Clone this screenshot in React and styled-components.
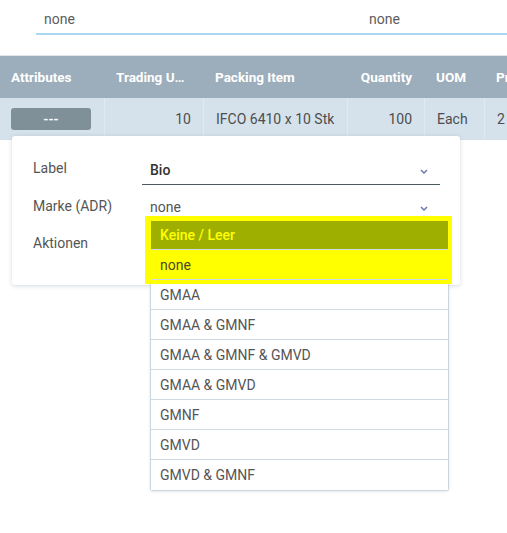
import React from "react";
import styled, { createGlobalStyle } from "styled-components";

const GlobalStyle = createGlobalStyle`
  html, body {
    margin: 0;
    padding: 0;
    background: #ffffff;
    font-family: Roboto, "Liberation Sans", Arial, sans-serif;
    font-size: 14px;
    color: #555;
    overflow: hidden;
  }
  * { box-sizing: border-box; }
`;

const Page = styled.div`
  position: relative;
  width: 507px;
  height: 533px;
  overflow: hidden;
`;

/* ---------- filter bar ---------- */
const FilterBar = styled.div`
  display: flex;
  height: 55px;
  padding-left: 36px;
`;

const FilterFields = styled.div`
  display: flex;
  flex: 1;
  height: 35px;
  border-bottom: 2px solid #a9d7f3;
`;

const FilterField = styled.div`
  width: ${(p) => p.$width}px;
  padding: 11px 8px 0;
  line-height: 17px;
  color: #5c5c5c;
`;

/* ---------- table ---------- */
const Table = styled.div`
  display: grid;
  grid-template-columns: 104px 99px 144px 77px 60px 90px;
  width: 574px;
`;

const HeadCell = styled.div`
  height: 43px;
  border-top: 1px solid #dfe5e9;
  background: #9caebb;
  color: #ffffff;
  font-size: 13.5px;
  font-weight: 700;
  display: flex;
  align-items: center;
  justify-content: ${(p) => (p.$right ? "flex-end" : "flex-start")};
  padding: 0 ${(p) => (p.$first ? 11 : 12)}px;
  white-space: nowrap;
`;

const HeadText = styled.span`
  display: block;
  max-width: ${(p) => (p.$clip ? "70px" : "none")};
  overflow: ${(p) => (p.$clip ? "hidden" : "visible")};
  text-overflow: ellipsis;
`;

const BodyCell = styled.div`
  height: 42px;
  background: #d5e2ec;
  border-left: ${(p) => (p.$first ? "none" : "1px solid #e0e9f0")};
  color: #4d4d4d;
  display: flex;
  align-items: center;
  justify-content: ${(p) => (p.$right ? "flex-end" : "flex-start")};
  padding: 0 ${(p) => (p.$first ? 11 : 12)}px;
  white-space: nowrap;
`;

const AttrButton = styled.div`
  width: 80px;
  height: 22px;
  border-radius: 3px;
  background: #7f9099;
  color: #ffffff;
  font-size: 13px;
  font-weight: 700;
  display: flex;
  align-items: center;
  justify-content: center;
`;

/* ---------- attribute popup ---------- */
const Popup = styled.div`
  position: absolute;
  top: 136px;
  left: 12px;
  width: 448px;
  height: 149px;
  background: #ffffff;
  border-radius: 3px;
  box-shadow: 0 1px 4px rgba(60, 80, 100, 0.22);
  padding: 13px 20px 0 21px;
  display: grid;
  grid-template-columns: 109px 1fr;
  grid-template-rows: 37px 37px 37px;
`;

const FieldLabel = styled.div`
  display: flex;
  align-items: center;
  color: #555;
  padding-top: ${(p) => p.$shift || 0}px;
`;

const Select = styled.div`
  position: relative;
  height: 36px;
  display: flex;
  align-items: flex-end;
  justify-content: space-between;
  padding: 0 12px 5px 8px;
  border-bottom: 1px solid ${(p) => (p.$underline ? "#4c5a61" : "transparent")};
  color: ${(p) => (p.$strong ? "#333" : "#555")};
  font-weight: ${(p) => (p.$strong ? 500 : 400)};
  line-height: 17px;
`;

const Chevron = styled.svg`
  width: 8px;
  height: 5px;
  margin-bottom: 5px;
`;

const ChevronIcon = () => (
  <Chevron viewBox="0 0 8 5">
    <path d="M1 1 L4 4 L7 1" fill="none" stroke="#6e79b0" strokeWidth="1.5" />
  </Chevron>
);

/* ---------- option list ---------- */
const OptionList = styled.div`
  position: absolute;
  top: 84px;
  left: 138px;
  width: 299px;
  background: #ffffff;
  border: 1px solid #c9d6de;
  border-top: none;
  border-radius: 0 0 3px 3px;
  box-shadow: 0 1px 3px rgba(60, 80, 100, 0.12);
  z-index: 2;
`;

const Option = styled.div`
  height: 30px;
  display: flex;
  align-items: center;
  padding: 0 9px;
  border-bottom: ${(p) => (p.$last ? "none" : "1px solid #cfdae2")};
  background: ${(p) => (p.$active ? "#9eaf00" : p.$marked ? "#ffff00" : "#ffffff")};
  color: ${(p) => (p.$active ? "#ffff00" : p.$marked ? "#4a4a2a" : "#555")};
  font-weight: ${(p) => (p.$active ? 500 : 400)};
  white-space: nowrap;
`;

const FocusRing = styled.div`
  position: absolute;
  top: -4px;
  left: -6px;
  right: -4px;
  height: 68px;
  border-style: solid;
  border-color: #ffff00;
  border-width: 5px 4px 4px 6px;
  pointer-events: none;
`;

const columns = [
  { key: "attr", title: "Attributes" },
  { key: "tu", title: "Trading Unit", right: true, clip: true },
  { key: "pack", title: "Packing Item" },
  { key: "qty", title: "Quantity", right: true },
  { key: "uom", title: "UOM" },
  { key: "price", title: "Price" },
];

const row = {
  tu: "10",
  pack: "IFCO 6410 x 10 Stk",
  qty: "100",
  uom: "Each",
  price: "2",
};

const options = [
  "Keine / Leer",
  "none",
  "GMAA",
  "GMAA & GMNF",
  "GMAA & GMNF & GMVD",
  "GMAA & GMVD",
  "GMNF",
  "GMVD",
  "GMVD & GMNF",
];

export default function App() {
  return (
    <>
      <GlobalStyle />
      <Page>
        <FilterBar>
          <FilterFields>
            <FilterField $width={325}>none</FilterField>
            <FilterField $width={146}>none</FilterField>
          </FilterFields>
        </FilterBar>

        <Table>
          {columns.map((c, i) => (
            <HeadCell key={c.key} $right={c.right && !c.clip} $first={i === 0}>
              <HeadText $clip={c.clip}>{c.title}</HeadText>
            </HeadCell>
          ))}
          {columns.map((c, i) => (
            <BodyCell key={c.key} $right={c.right} $first={i === 0}>
              {i === 0 ? <AttrButton>---</AttrButton> : row[c.key]}
            </BodyCell>
          ))}
        </Table>

        <Popup>
          <FieldLabel>Label</FieldLabel>
          <Select $underline $strong>
            <span>Bio</span>
            <ChevronIcon />
          </Select>
          <FieldLabel $shift={2}>Marke (ADR)</FieldLabel>
          <Select>
            <span>none</span>
            <ChevronIcon />
          </Select>
          <FieldLabel $shift={2}>Aktionen</FieldLabel>
          <div />

          <OptionList>
            {options.map((o, i) => (
              <Option
                key={o}
                $active={i === 0}
                $marked={i === 1}
                $last={i === options.length - 1}
              >
                {o}
              </Option>
            ))}
            <FocusRing />
          </OptionList>
        </Popup>
      </Page>
    </>
  );
}
